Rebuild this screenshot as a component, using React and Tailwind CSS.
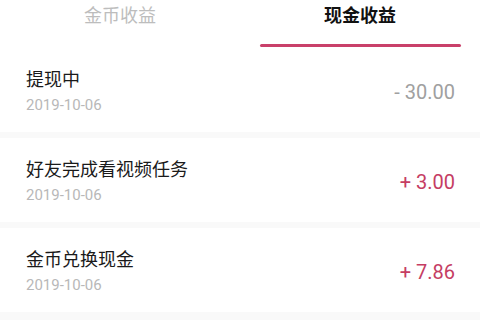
import React from "react";

const rows = [
  { title: "提现中", date: "2019-10-06", amount: "- 30.00", neg: true },
  { title: "好友完成看视频任务", date: "2019-10-06", amount: "+ 3.00" },
  { title: "金币兑换现金", date: "2019-10-06", amount: "+ 7.86" },
];

export default function App() {
  return (
    <div
      className="w-[480px] h-[320px] overflow-hidden bg-[#f9f9f9]"
      style={{ fontFamily: '"Noto Sans CJK SC", "Noto Sans", sans-serif' }}
    >
      <div className="flex h-[48px] bg-white">
        <div className="flex-1 flex flex-col items-center">
          <div className="h-[28px] leading-[28px] text-[18px] text-[#bdbdbd]">金币收益</div>
        </div>
        <div className="flex-1 flex flex-col items-center">
          <div className="h-[28px] leading-[28px] text-[18px] font-bold text-[#111]">现金收益</div>
          <div className="mt-[16px] w-[201px] h-[3px] rounded-full bg-[#c9406a]" />
        </div>
      </div>
      <div className="flex flex-col gap-[6px]">
        {rows.map((r, i) => (
          <div key={i} className="h-[84px] bg-white flex items-center justify-between pl-[26px] pr-[25px]">
            <div className="flex flex-col">
              <div className="text-[18px] leading-[24px] text-[#1a1a1a]">{r.title}</div>
              <div
                className="mt-[5px] text-[15px] leading-[20px] text-[#b8b8b8]"
                style={{ fontFamily: 'Roboto, "Noto Sans", sans-serif' }}
              >
                {r.date}
              </div>
            </div>
            <div
              className={`text-[20px] leading-[24px] pt-[4px] ${r.neg ? "text-[#a0a0a0]" : "text-[#c53d63]"}`}
              style={{ fontFamily: 'Roboto, "Noto Sans", sans-serif' }}
            >
              {r.amount}
            </div>
          </div>
        ))}
      </div>
    </div>
  );
}
